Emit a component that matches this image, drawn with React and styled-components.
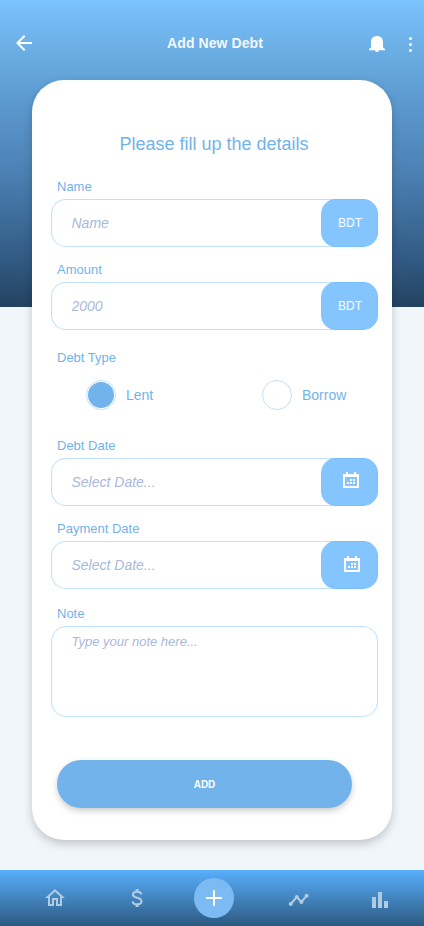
import React, { useState } from "react";
import styled, { createGlobalStyle } from "styled-components";

const GlobalStyle = createGlobalStyle`
  *, *::before, *::after { box-sizing: border-box; }
  html, body { margin: 0; padding: 0; }
  body { background: #f1f6fb; font-family: "Liberation Sans", Arial, sans-serif; }
`;

const Screen = styled.div`
  width: 100%;
  height: 926px;
  display: flex;
  flex-direction: column;
  overflow: hidden;
  background: linear-gradient(180deg, #7cc2ff 0px, #66a8dc 67px, #5e9bd2 96px, #4b80b2 175px, #325b85 257px, #234260 307px, #f1f6fb 307px);
`;

const TopBar = styled.header`
  height: 80px;
  flex: none;
  display: flex;
  align-items: center;
  padding: 6px 6px 0 12px;
`;

const Title = styled.h1`
  flex: 1;
  margin: 0;
  padding-left: 29px;
  text-align: center;
  font-size: 14px;
  line-height: 20px;
  font-weight: 700;
  letter-spacing: 0.08px;
  color: #f4f7fa;
`;

const IconButton = styled.button`
  display: flex;
  align-items: center;
  justify-content: center;
  width: ${(p) => p.$width || 24}px;
  height: 24px;
  margin-right: ${(p) => p.$gap || 0}px;
  padding: ${(p) => p.$drop || 0}px 0 0;
  border: 0;
  background: none;
  color: #fff;
  svg { display: block; flex: none; }
`;

const Card = styled.main`
  flex: none;
  width: 360px;
  height: 760px;
  margin: 0 auto;
  padding: 54px 14px 0 19px;
  display: flex;
  flex-direction: column;
  border-radius: 32px;
  background: #fff;
  box-shadow: 0 4px 10px rgba(0, 0, 0, 0.2);
`;

const Heading = styled.h2`
  margin: 0 1px 23px 0;
  text-align: center;
  font-size: 18px;
  line-height: 20px;
  font-weight: 400;
  color: #72b3eb;
`;

const Field = styled.div`
  display: flex;
  flex-direction: column;
  margin-bottom: ${(p) => p.$gap}px;
`;

const Label = styled.label`
  height: 20px;
  padding-left: 6px;
  margin-bottom: ${(p) => p.$gap ?? 2}px;
  font-size: 13px;
  line-height: 20px;
  color: #72b3eb;
`;

const inputColors = `
  border: 1px solid #bfe1fd;
  outline: none;
  background: #fff;
  color: #72b3eb;
  font-family: inherit;
  &::placeholder { color: #a9b8dc; font-style: italic; opacity: 1; }
`;

const InputRow = styled.div`
  display: flex;
  height: 48px;
`;

const Input = styled.input`
  flex: 1;
  min-width: 0;
  margin-right: -18px;
  padding: 0 20px 0 19.5px;
  border-radius: 15px 0 0 15px;
  font-size: 14px;
  ${inputColors}
  border-right: 0;
`;

const Addon = styled.div`
  z-index: 1;
  width: 57px;
  display: flex;
  align-items: center;
  justify-content: center;
  padding: 0 0 ${(p) => p.$lift || 0}px ${(p) => p.$shift || 0}px;
  border: 1px solid #7abffb;
  border-left-color: #84c5ff;
  border-radius: 15px;
  background: #84c5ff;
  color: #fff;
  font-size: 12px;
`;

const TextArea = styled.textarea`
  display: block;
  height: 91px;
  padding: 6px 19.5px;
  border-radius: 15px;
  resize: none;
  font-size: 13px;
  line-height: 17px;
  ${inputColors}
`;

const Options = styled.div`
  display: flex;
  height: 30px;
  padding-left: 35px;
`;

const Option = styled.label`
  display: flex;
  align-items: center;
  width: 176px;
  font-size: 14px;
  color: #72b3eb;
  &:last-child { width: auto; }
`;

const Radio = styled.input`
  appearance: none;
  width: 30px;
  height: 30px;
  margin: 0 10px 0 0;
  border: 1px solid #bfe1fd;
  border-radius: 50%;
  background: #fff;
  &:checked { padding: 1px; background: #72b3eb content-box; }
`;

const AddButton = styled.button`
  width: 295px;
  height: 48px;
  margin: 43px 0 0 6px;
  padding: 1px 0 0;
  border: 0;
  border-radius: 24px;
  background: #72b3eb;
  box-shadow: 0 3px 6px rgba(0, 0, 0, 0.2);
  color: #fff;
  font: 700 10px "Liberation Sans", Arial, sans-serif;
`;

const BottomNav = styled.nav`
  height: 56px;
  flex: none;
  margin-top: auto;
  display: flex;
  align-items: center;
  background: linear-gradient(180deg, #58affd 0%, #2d5980 100%);
`;

const NavItem = styled.button`
  width: 24px;
  height: 24px;
  margin-left: ${(p) => p.$gap}px;
  padding: 0;
  border: 0;
  background: none;
  color: #b0cce3;
  svg { display: block; }
`;

const NavAction = styled.button`
  display: flex;
  align-items: center;
  justify-content: center;
  width: 40px;
  height: 40px;
  margin-left: 45px;
  padding: 0;
  border: 0;
  border-radius: 50%;
  background: #7bbaf2;
  color: #fff;
`;

const Icon = ({ size = 24, children }) => (
  <svg width={size} height={size} viewBox="0 0 24 24" fill="currentColor" aria-hidden="true">{children}</svg>
);

const CalendarIcon = () => (
  <svg width="16" height="16" viewBox="0 0 16 16" fill="currentColor" shapeRendering="crispEdges" aria-hidden="true">
    <path fillRule="evenodd" d="M0 2h3V0h2v2h6V0h2v2h3v14H0zM2 5v9h12V5z" />
    <path d="M7 7h2v2H7zM10 7h2v2h-2zM4 10h2v2H4zM7 10h2v2H7zM10 10h2v2h-2z" />
  </svg>
);

const AddonField = ({ label, placeholder, gap, lift, shift, children }) => (
  <Field $gap={gap}>
    <Label>{label}</Label>
    <InputRow>
      <Input placeholder={placeholder} aria-label={label} />
      <Addon $lift={lift} $shift={shift}>{children}</Addon>
    </InputRow>
  </Field>
);

export default function App() {
  const [type, setType] = useState("Lent");
  return (
    <>
      <GlobalStyle />
      <Screen>
        <TopBar>
          <IconButton aria-label="Back">
            <Icon><path d="M20 11H7.83l5.59-5.59L12 4l-8 8 8 8 1.41-1.41L7.83 13H20v-2z" /></Icon>
          </IconButton>
          <Title>Add New Debt</Title>
          <IconButton aria-label="Notifications" $gap={14} $drop={2}>
            <svg width="16" height="16" viewBox="0 0 16 16" fill="currentColor" aria-hidden="true">
              <path d="M8 0C11.7 0 14 2.4 14 5.8V10.2C14 11.6 14.6 12.4 16 12.8V14.3H10C9.8 15.4 9.1 16 8 16S6.2 15.4 6 14.3H0V12.8C1.4 12.4 2 11.6 2 10.2V5.8C2 2.4 4.3 0 8 0Z" />
            </svg>
          </IconButton>
          <IconButton aria-label="More" $width={15} $drop={3}>
            <svg width="3" height="15" viewBox="0 0 3 15" fill="currentColor" aria-hidden="true">
              <circle cx="1.5" cy="1.5" r="1.5" /><circle cx="1.5" cy="7.5" r="1.5" /><circle cx="1.5" cy="13.5" r="1.5" />
            </svg>
          </IconButton>
        </TopBar>
        <Card>
          <Heading>Please fill up the details</Heading>
          <AddonField label="Name" placeholder="Name" gap={13} shift={1}>BDT</AddonField>
          <AddonField label="Amount" placeholder="2000" gap={18} shift={1}>BDT</AddonField>
          <Field $gap={26}>
            <Label as="span" $gap={12}>Debt Type</Label>
            <Options>
              {["Lent", "Borrow"].map((name) => (
                <Option key={name}>
                  <Radio type="radio" name="type" checked={type === name} onChange={() => setType(name)} />
                  {name}
                </Option>
              ))}
            </Options>
          </Field>
          <AddonField label="Debt Date" placeholder="Select Date..." gap={13} lift={4} shift={3}><CalendarIcon /></AddonField>
          <AddonField label="Payment Date" placeholder="Select Date..." gap={15} lift={2} shift={5}><CalendarIcon /></AddonField>
          <Field $gap={0}>
            <Label>Note</Label>
            <TextArea placeholder="Type your note here..." />
          </Field>
          <AddButton>ADD</AddButton>
        </Card>
        <BottomNav>
          <NavItem aria-label="Home" $gap={43}>
            <Icon><path d="M12 5.69l5 4.5V18h-2v-6H9v6H7v-7.81l5-4.5M12 3L2 12h3v8h6v-6h2v6h6v-8h3L12 3z" /></Icon>
          </NavItem>
          <NavItem aria-label="Money" $gap={58}>
            <Icon>
              <path d="M16.3 8.3C16 6.5 14.3 5.7 12.1 5.7C9.6 5.7 7.9 6.7 7.9 8.5C7.9 10.4 9.7 11.1 12.1 11.7C14.7 12.3 16.5 13.2 16.5 15.2C16.5 17.2 14.7 18.3 12.1 18.3C9.5 18.3 7.8 17.3 7.6 15.3" fill="none" stroke="currentColor" strokeWidth="2.1" />
              <path d="M10.6 3h3v3h-3zM10.6 18h3v3h-3z" />
            </Icon>
          </NavItem>
          <NavAction aria-label="Add">
            <svg width="16" height="16" viewBox="0 0 16 16" fill="currentColor" aria-hidden="true"><path d="M7 0h2v7h7v2H9v7H7V9H0V7h7z" /></svg>
          </NavAction>
          <NavItem aria-label="Activity" $gap={53}>
            <Icon>
              <path d="M3.7 18L9.8 11L14.4 16L19.6 9.8" fill="none" stroke="currentColor" strokeWidth="2" />
              <circle cx="3.7" cy="18" r="2" /><circle cx="9.8" cy="11" r="2" /><circle cx="14.4" cy="16" r="2" /><circle cx="19.6" cy="9.8" r="2" />
            </Icon>
          </NavItem>
          <NavItem aria-label="Statistics" $gap={57}>
            <Icon><path d="M4 11h4v11H4zM10 6h4v16h-4zM16 15h4v7h-4z" /></Icon>
          </NavItem>
        </BottomNav>
      </Screen>
    </>
  );
}
